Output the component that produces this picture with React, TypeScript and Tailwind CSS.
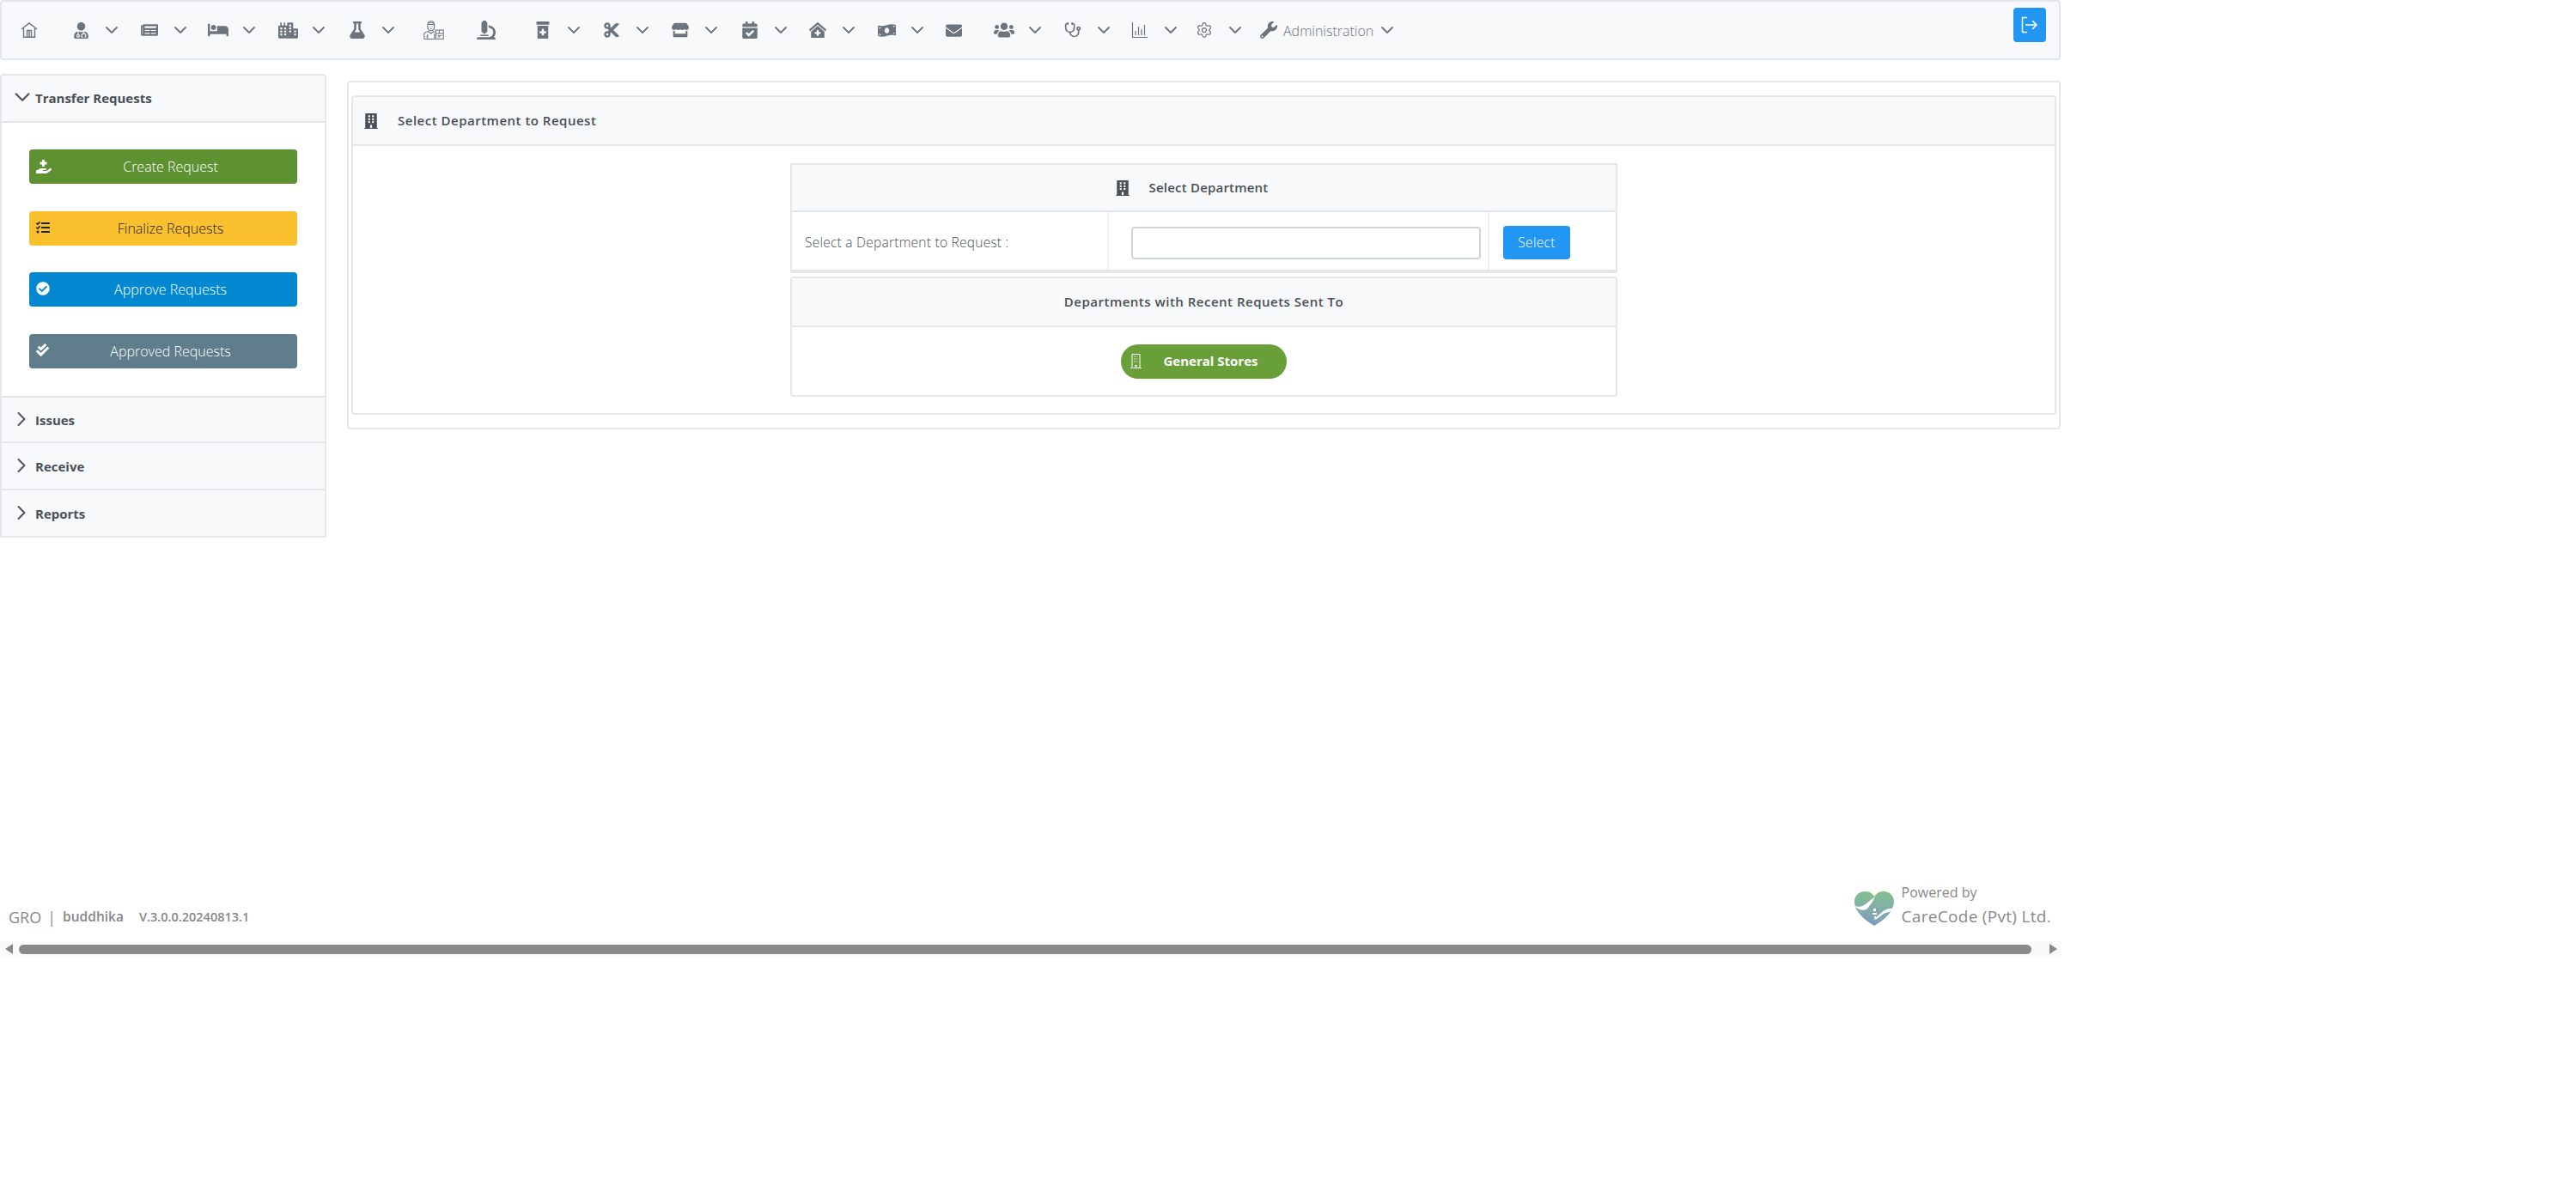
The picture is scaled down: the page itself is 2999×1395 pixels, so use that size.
import { ChevronDown, ChevronRight, Settings, Stethoscope } from "lucide-react";
import {
  FaBed,
  FaBuilding,
  FaCalendarCheck,
  FaCheckCircle,
  FaCheckDouble,
  FaCity,
  FaClinicMedical,
  FaCut,
  FaEnvelope,
  FaFlask,
  FaHandHoldingMedical,
  FaMicroscope,
  FaMoneyBillWave,
  FaNewspaper,
  FaPrescriptionBottleAlt,
  FaStore,
  FaTasks,
  FaUserMd,
  FaUsers,
  FaWrench,
} from "react-icons/fa";

function HomeIcon() {
  return (
    <svg width="20" height="18" viewBox="0 0 20 18" fill="none" stroke="#6c757d" strokeWidth="1.4">
      <path d="M1 8l9-7 9 7M3.5 7v10.3h13V7" />
      <path d="M7.5 17V9.5M10 17V9.5M12.5 17V9.5M7 9.5h6" />
    </svg>
  );
}

function ChartIcon() {
  return (
    <svg width="20" height="20" viewBox="0 0 20 20" fill="none" stroke="#6c757d" strokeWidth="1.2">
      <path d="M1.5 1v17.5H19" />
      <path d="M5 16V11M8.5 16V6M12 16V9M15.5 16V4" />
    </svg>
  );
}

function DoctorIcon() {
  return (
    <svg width="30" height="28" viewBox="0 0 30 28" fill="none" stroke="#6c757d" strokeWidth="1.3">
      <path d="M6 8c0-5 2-7 5-7s5 2 5 7c0 4-2 7-5 7s-5-3-5-7z" />
      <path d="M6 6h10M7 4c2-1 6-1 8 0M9 9h1M12 9h1M10 12h2" />
      <path d="M1 27v-7c0-2 2-3 6-4l4 3 4-3 2 1M1 27h15V19M6 20v7M4 23h1" />
      <rect x="18" y="14" width="11" height="13" />
      <path d="M18 19h11M23 14v5M21 22h5M21 24h3" />
    </svg>
  );
}

function LogoutIcon() {
  return (
    <svg width="20" height="20" viewBox="0 0 20 20" fill="none" stroke="#ffffff" strokeWidth="1.5">
      <path d="M7 1.5H1.5v17H7M5 10h13M13 5l5 5-5 5" />
    </svg>
  );
}

function BuildingLineIcon() {
  return (
    <svg width="13" height="17" viewBox="0 0 13 17" fill="none" stroke="#ffffff" strokeWidth="1">
      <path d="M0 16.5h13M2 16.5V.5h9v16M5.5 16.5v-3h2v3" />
      <path d="M4 3h1M6 3h1M8.5 3h.5M4 6h1M6 6h1M8.5 6h.5M4 9h1M6 9h1M8.5 9h.5" />
    </svg>
  );
}

function CareCodeLogo() {
  return (
    <svg width="48" height="42" viewBox="0 0 48 42">
      <defs>
        <linearGradient id="heart" x1="0" y1="0" x2="0" y2="1">
          <stop offset="0%" stopColor="#83c08f" />
          <stop offset="100%" stopColor="#7f9cc0" />
        </linearGradient>
      </defs>
      <path d="M24 41C12 34 1 24 1 13 1 5 7 1 13 1c5 0 9 2 11 6 3-4 6-6 11-6 7 0 12 5 12 12 0 11-11 21-23 28z" fill="url(#heart)" />
      <path d="M1 18c6 2 11 0 15-4l9-7-3 6-6 8c-4 3-10 2-15-3z" fill="#ffffff" />
      <path d="M47 21c-6-1-11 1-15 5l-9 8 4-1 8-6c4-2 9-2 12-6z" fill="#ffffff" />
      <path d="M23 21h3v3h-3zM22 26h5v2h-5zM24 30h2v2h-2z" fill="#ffffff" />
    </svg>
  );
}

const navItems = [
  { id: "home", icon: <HomeIcon />, width: "w-[60px]", chevron: false },
  { id: "doctor", icon: <FaUserMd size={19} />, width: "w-[80px]", chevron: true },
  { id: "news", icon: <FaNewspaper size={20} />, width: "w-[80px]", chevron: true },
  { id: "bed", icon: <FaBed size={24} />, width: "w-[81px]", chevron: true },
  { id: "city", icon: <FaCity size={23} />, width: "w-[81px]", chevron: true },
  { id: "flask", icon: <FaFlask size={20} />, width: "w-[89px]", chevron: true },
  { id: "store-man", icon: <DoctorIcon />, width: "w-[61px]", chevron: false },
  { id: "microscope", icon: <FaMicroscope size={22} />, width: "w-[66px]", chevron: false },
  { id: "pill", icon: <FaPrescriptionBottleAlt size={20} />, width: "w-[80px]", chevron: true },
  { id: "cut", icon: <FaCut size={20} />, width: "w-[80px]", chevron: true },
  { id: "store", icon: <FaStore size={20} />, width: "w-[81px]", chevron: true },
  { id: "calendar", icon: <FaCalendarCheck size={20} />, width: "w-[79px]", chevron: true },
  { id: "clinic", icon: <FaClinicMedical size={20} />, width: "w-[80px]", chevron: true },
  { id: "money", icon: <FaMoneyBillWave size={21} />, width: "w-[78px]", chevron: true },
  { id: "mail", icon: <FaEnvelope size={19} />, width: "w-[59px]", chevron: false },
  { id: "users", icon: <FaUsers size={24} />, width: "w-[80px]", chevron: true },
  { id: "stethoscope", icon: <Stethoscope size={20} strokeWidth={2} />, width: "w-[78px]", chevron: true },
  { id: "chart", icon: <ChartIcon />, width: "w-[75px]", chevron: true },
  { id: "gear", icon: <Settings size={20} strokeWidth={1.5} />, width: "w-[75px]", chevron: true },
];

const actions = [
  { label: "Create Request", color: "bg-[#5e9132] text-white", icon: <FaHandHoldingMedical size={18} /> },
  { label: "Finalize Requests", color: "bg-[#fbc02d] text-[#212529]", icon: <FaTasks size={16} /> },
  { label: "Approve Requests", color: "bg-[#0288d1] text-white", icon: <FaCheckCircle size={16} /> },
  { label: "Approved Requests", color: "bg-[#607d8b] text-white", icon: <FaCheckDouble size={15} /> },
];

export default function App() {
  return (
    <div className="min-h-[1395px] w-full bg-white font-['Open_Sans',sans-serif] text-[#495057]">
      <div className="w-[2400px]">
        {/* top menu */}
        <div className="flex h-[70px] w-[2399px] items-center rounded border-2 border-[#e3e6ea] bg-[#f8f9fa] pl-[20px] pr-[15px] text-[#6c757d]">
          {navItems.map((item) => (
            <div key={item.id} className={`flex shrink-0 items-center gap-[12px] ${item.width}`}>
              <span className="flex w-[24px] items-center justify-center">{item.icon}</span>
              {item.chevron && <ChevronDown size={24} strokeWidth={1.8} className="shrink-0" />}
            </div>
          ))}
          <div className="flex items-center">
            <span className="flex w-[24px] justify-center"><FaWrench size={20} /></span>
            <span className="ml-[5px] mt-[2px] text-[16px] font-light leading-none">Administration</span>
            <ChevronDown size={24} strokeWidth={1.8} className="ml-[4px]" />
          </div>
          <button className="ml-auto mb-[13px] flex h-[40px] w-[38px] items-center justify-center rounded bg-[#2196f3]">
            <LogoutIcon />
          </button>
        </div>

        <div className="mt-[16px] flex items-start">
          {/* side panel */}
          <aside className="mr-[24px] w-[380px] shrink-0">
            <div className="flex h-[57px] items-center rounded-t border-2 border-[#e5e7eb] bg-[#f8f9fa] pl-[9px] text-[15px] font-bold">
              <ChevronDown size={30} strokeWidth={1.6} className="mb-[3px] shrink-0" />
              Transfer Requests
            </div>
            <div className="flex flex-col gap-[31.5px] border-x-2 border-[#e5e7eb] px-[32px] pb-[32px] pt-[31px]">
              {actions.map((a) => (
                <button key={a.label} className={`relative flex h-[40px] items-center justify-center rounded pl-[17px] text-[16px] font-light ${a.color}`}>
                  <span className="absolute left-[8px] top-[11px]">{a.icon}</span>
                  {a.label}
                </button>
              ))}
            </div>
            {["Issues", "Receive", "Reports"].map((label, i) => (
              <div key={label} className={`flex h-[55px] items-center border-x-2 border-b-2 border-[#e5e7eb] bg-[#f8f9fa] pl-[9px] text-[15px] font-bold ${i === 0 ? "border-t-2" : ""}`}>
                <ChevronRight size={28} strokeWidth={1.6} className="mr-[2px] shrink-0" />
                <span className="mt-[3px]">{label}</span>
              </div>
            ))}
          </aside>

          {/* main panel */}
          <main className="mt-[8px] w-[1995px] rounded-sm border-2 border-[#e5e7eb] px-[3px] py-[15px]">
            <div className="rounded border-2 border-[#e5e7eb]">
              <div className="flex h-[57px] items-center border-b-2 border-[#e5e7eb] bg-[#f8f9fa] pl-[12px] text-[15px] font-semibold tracking-[0.5px]">
                <FaBuilding size={18} className="mr-[22px]" />
                Select Department to Request
              </div>
              <div className="flex flex-col items-center pb-[19px] pt-[20px]">
                <div className="w-[963px]">
                  <div className="border-2 border-b-0 border-[#e5e7eb]">
                    <div className="flex h-[55px] items-center justify-center border-b-2 border-[#e5e7eb] bg-[#f8f9fa] pr-[29px] text-[15px] font-semibold tracking-[0.2px]">
                      <FaBuilding size={18} className="mr-[22px]" />
                      Select Department
                    </div>
                    <div className="flex h-[71px] items-center border-b-4 border-[#e5e7eb]">
                      <div className="flex h-full w-[369px] shrink-0 items-center border-r-2 border-[#edeff1] pl-[15px] pt-[5px] text-[15.5px] font-light tracking-[0.25px]">
                        Select a Department to Request :
                      </div>
                      <div className="flex h-full w-[443px] shrink-0 items-center border-r-2 border-[#edeff1] pl-[26px] pt-[4px]">
                        <input className="h-[38px] w-[407px] rounded border-2 border-[#ced4da] bg-white" />
                      </div>
                      <button className="ml-[16px] mt-[4px] h-[39px] w-[78px] rounded bg-[#2196f3] text-[15.5px] font-light tracking-[0.3px] text-white">Select</button>
                    </div>
                  </div>
                  <div className="mt-[4px] rounded-sm border-2 border-[#e5e7eb]">
                    <div className="flex h-[57px] items-center justify-center border-b-2 border-[#e5e7eb] bg-[#f8f9fa] text-[15px] font-semibold tracking-[0.5px]">
                      Departments with Recent Requets Sent To
                    </div>
                    <div className="flex h-[79px] items-center justify-center">
                      <button className="relative flex h-[40px] w-[193px] items-center justify-center rounded-full bg-[#689f38] pl-[16px] text-[15px] font-bold text-white">
                        <span className="absolute left-[11px] top-[11px]"><BuildingLineIcon /></span>
                        General Stores
                      </button>
                    </div>
                  </div>
                </div>
              </div>
            </div>
          </main>
        </div>

        {/* footer */}
        <div className="mt-[401px] flex items-end justify-between pl-[10px] pr-[12px] text-[#888888]">
          <div className="flex items-center pb-[1px]">
            <span className="text-[18px] font-normal">GRO</span>
            <span className="ml-[7px] text-[18px] font-normal">|</span>
            <span className="ml-[8px] text-[15.5px] font-semibold">buddhika</span>
            <span className="ml-[18px] text-[14.5px] font-semibold">V.3.0.0.20240813.1</span>
          </div>
          <div className="flex items-start gap-[8px]">
            <span className="mt-[10px]"><CareCodeLogo /></span>
            <div className="flex flex-col">
              <span className="text-[16px] leading-[24px]">Powered by</span>
              <span className="text-[19px] leading-[32px] tracking-[0.3px]">CareCode (Pvt) Ltd.</span>
            </div>
          </div>
        </div>

        {/* horizontal scrollbar */}
        <div className="mt-[13px] flex h-[19px] items-center bg-[#fafafa]">
          <svg width="9" height="12" viewBox="0 0 9 12" className="ml-[6px] mr-[7px] shrink-0" fill="#8a8a8a"><path d="M9 0v12L0 6z" /></svg>
          <div className="h-[11px] w-[2343px] rounded-full bg-[#8a8a8a]" />
          <svg width="9" height="12" viewBox="0 0 9 12" className="ml-[21px] shrink-0" fill="#8a8a8a"><path d="M0 0v12l9-6z" /></svg>
        </div>
      </div>
    </div>
  );
}
